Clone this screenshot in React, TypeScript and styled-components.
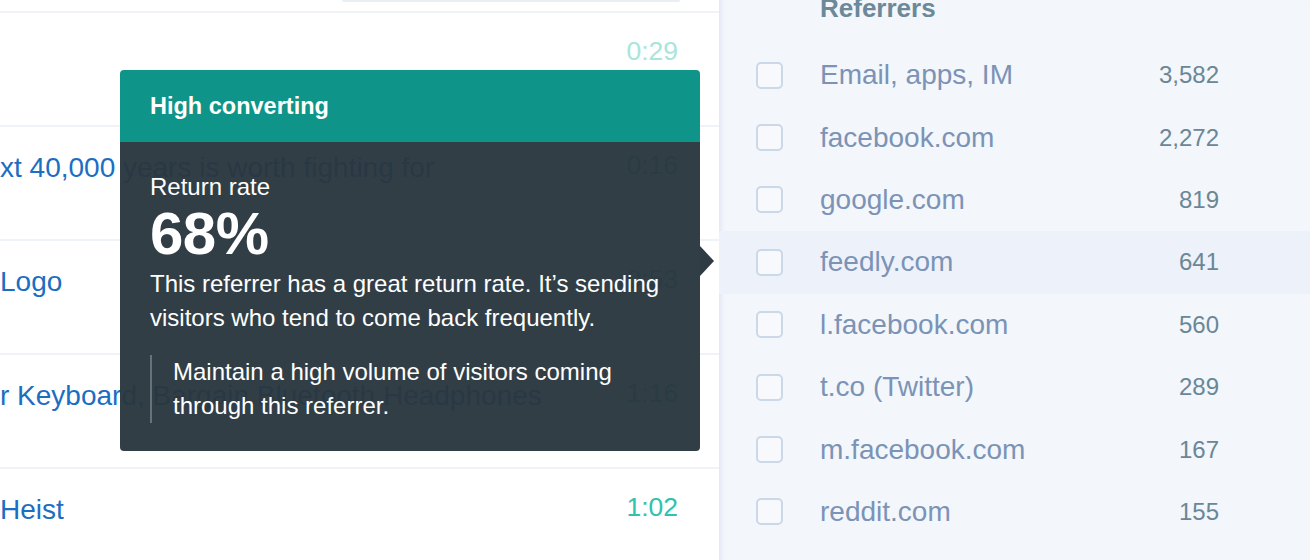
import React from "react";
import styled, { createGlobalStyle } from "styled-components";

const GlobalStyle = createGlobalStyle`
  html, body {
    margin: 0;
    padding: 0;
    background: #ffffff;
  }
  body {
    font-family: "Liberation Sans", Arial, Helvetica, sans-serif;
    -webkit-font-smoothing: antialiased;
  }
  * { box-sizing: border-box; }
`;

const Page = styled.div`
  display: grid;
  grid-template-columns: 719px 1fr;
  width: 1310px;
  height: 560px;
  overflow: hidden;
`;

const LeftPanel = styled.section`
  position: relative;
  background: #ffffff;
  display: flex;
  flex-direction: column;
`;

const TopBar = styled.div`
  height: 13px;
  flex: none;
  display: flex;
  justify-content: flex-end;
  padding-right: 39px;
  border-bottom: 2px solid #eff3f7;
`;

const TopField = styled.div`
  width: 338px;
  height: 2px;
  background: #e8eef3;
  border-radius: 0 0 3px 3px;
`;

const VideoRow = styled.div`
  flex: none;
  height: 114px;
  display: flex;
  justify-content: space-between;
  align-items: flex-start;
  padding: 24px 41px 0 0;
  border-bottom: 2px solid #eff3f7;
`;

const VideoTitle = styled.a`
  font-size: 28px;
  line-height: 34px;
  color: #1b6ec2;
  text-decoration: none;
  white-space: nowrap;
`;

const Duration = styled.span<{ $faded?: boolean }>`
  font-size: 26.5px;
  line-height: 34px;
  margin-top: -3px;
  color: ${(p) => (p.$faded ? "#a8e5dc" : "#30c2ae")};
`;

const Tooltip = styled.div`
  position: absolute;
  left: 120px;
  top: 70px;
  width: 580px;
  border-radius: 4px;
  color: #ffffff;
  z-index: 2;

  &::after {
    content: "";
    position: absolute;
    left: 100%;
    top: 176px;
    border-left: 14px solid rgba(40, 53, 61, 0.97);
    border-top: 15px solid transparent;
    border-bottom: 15px solid transparent;
  }
`;

const TooltipHeader = styled.div`
  height: 72px;
  display: flex;
  align-items: center;
  padding: 0 30px;
  background: #0e9488;
  border-radius: 4px 4px 0 0;
  font-weight: 700;
  font-size: 23.5px;
`;

const TooltipBody = styled.div`
  height: 309px;
  padding: 31px 30px 0;
  background: rgba(41, 54, 62, 0.96);
  border-radius: 0 0 4px 4px;
`;

const StatLabel = styled.div`
  font-size: 24px;
  line-height: 28px;
`;

const StatValue = styled.div`
  margin-top: 4px;
  font-size: 60px;
  line-height: 58px;
  font-weight: 700;
  letter-spacing: -0.5px;
`;

const Description = styled.p`
  margin: 4px 0 0;
  font-size: 24px;
  line-height: 34px;
`;

const Advice = styled.blockquote`
  margin: 20px 0 0;
  padding-left: 21px;
  border-left: 2px solid #66737c;
  font-size: 24px;
  line-height: 34px;
`;

const RightPanel = styled.aside`
  background: #f3f6fa;
  box-shadow: inset 5px 0 4px -3px rgba(70, 80, 170, 0.1);
  display: flex;
  flex-direction: column;
`;

const Heading = styled.h3`
  margin: 0;
  height: 44px;
  flex: none;
  padding-left: 101px;
  font-size: 26px;
  line-height: 16px;
  font-weight: 700;
  color: #6b8999;
`;

const ReferrerRow = styled.label<{ $active?: boolean }>`
  flex: none;
  height: 62.4px;
  display: grid;
  grid-template-columns: 27px 1fr auto;
  column-gap: 37px;
  align-items: center;
  padding: 0 91px 0 37px;
  background: ${(p) => (p.$active ? "#edf1f9" : "transparent")};
`;

const CheckBox = styled.span`
  width: 27px;
  height: 27px;
  border: 2px solid #cbd8e8;
  border-radius: 5px;
  background: #f7f9fc;
`;

const ReferrerName = styled.span`
  font-size: 28px;
  line-height: 34px;
  color: #7b93b6;
`;

const ReferrerCount = styled.span`
  font-size: 24px;
  line-height: 34px;
  color: #6a8797;
  text-align: right;
`;

const videos = [
  { title: "", time: "0:29", faded: true },
  { title: "xt 40,000 years is worth fighting for", time: "0:16" },
  { title: "Logo", time: "0:53" },
  { title: "r Keyboard, Bargain Bluetooth Headphones", time: "1:16" },
  { title: "Heist", time: "1:02" },
];

const referrers = [
  { name: "Email, apps, IM", count: "3,582" },
  { name: "facebook.com", count: "2,272" },
  { name: "google.com", count: "819" },
  { name: "feedly.com", count: "641", active: true },
  { name: "l.facebook.com", count: "560" },
  { name: "t.co (Twitter)", count: "289" },
  { name: "m.facebook.com", count: "167" },
  { name: "reddit.com", count: "155" },
];

export default function App() {
  return (
    <>
      <GlobalStyle />
      <Page>
        <LeftPanel>
          <TopBar>
            <TopField />
          </TopBar>
          {videos.map((v, i) => (
            <VideoRow key={i}>
              <VideoTitle>{v.title}</VideoTitle>
              <Duration $faded={v.faded}>{v.time}</Duration>
            </VideoRow>
          ))}
          <Tooltip>
            <TooltipHeader>High converting</TooltipHeader>
            <TooltipBody>
              <StatLabel>Return rate</StatLabel>
              <StatValue>68%</StatValue>
              <Description>
                This referrer has a great return rate. It’s sending visitors who tend to come
                back frequently.
              </Description>
              <Advice>Maintain a high volume of visitors coming through this referrer.</Advice>
            </TooltipBody>
          </Tooltip>
        </LeftPanel>
        <RightPanel>
          <Heading>Referrers</Heading>
          {referrers.map((r) => (
            <ReferrerRow key={r.name} $active={r.active}>
              <CheckBox />
              <ReferrerName>{r.name}</ReferrerName>
              <ReferrerCount>{r.count}</ReferrerCount>
            </ReferrerRow>
          ))}
        </RightPanel>
      </Page>
    </>
  );
}
